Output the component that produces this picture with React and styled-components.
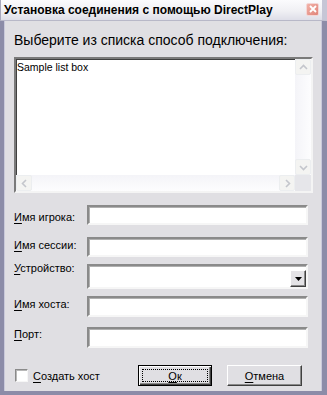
import React from "react";
import styled, { createGlobalStyle } from "styled-components";

const Global = createGlobalStyle`
  html, body { margin: 0; padding: 0; background: #e0dfe3; }
  body {
    font-family: "Liberation Sans", Arial, sans-serif;
    font-size: 11px;
    color: #000;
  }
  * { box-sizing: border-box; }
`;

const Window = styled.div`
  width: 327px;
  height: 395px;
  display: flex;
  flex-direction: column;
  background: #e0dfe3;
`;

const TitleBar = styled.div`
  height: 21px;
  display: flex;
  align-items: center;
  justify-content: space-between;
  padding: 0 3px 0 3px;
  background: linear-gradient(#fbfbfd 0%, #f0f0f4 55%, #dedee8 100%);
  border-left: 1px solid #a8a8bc;
  border-right: 5px solid #c6c6d6;
  border-bottom: 1px solid #b8b8c8;
`;

const Title = styled.div`
  font-family: "Liberation Sans", Arial, sans-serif;
  font-weight: bold;
  font-size: 12px;
  color: #000;
  white-space: nowrap;
`;

const CloseBtn = styled.div`
  width: 13px;
  height: 13px;
  margin-top: -2px;
  border: 1px solid #f4d6d6;
  border-radius: 2px;
  background: linear-gradient(135deg, #f2b2a8, #e0847a);
  display: flex;
  align-items: center;
  justify-content: center;
`;

const Frame = styled.div`
  flex: 1;
  display: flex;
  flex-direction: column;
  border-left: 4px solid #8c8ca8;
  border-right: 5px solid #8c8ca8;
  border-bottom: 4px solid #8c8ca8;
  position: relative;
  background: #e0dfe3;
  padding: 11px 9px 0 10px;
  &::before {
    content: "";
    position: absolute;
    inset: 0;
    pointer-events: none;
    border-left: 1px solid #c9c9da;
    border-right: 1px solid #c9c9da;
  }
`;

const Prompt = styled.div`
  font-size: 14px;
  line-height: 16px;
  height: 16px;
  white-space: nowrap;
`;

const ListBox = styled.div`
  margin-top: 9px;
  height: 136px;
  background: #fff;
  border: 2px solid;
  border-color: #7a7a7a #f4f4f4 #f4f4f4 #7a7a7a;
  box-shadow: inset 1px 1px 0 #404040;
  display: grid;
  grid-template-columns: 1fr 16px;
  grid-template-rows: 1fr 16px;
`;

const ListItems = styled.div`
  padding: 1px 1px;
  font-size: 10.5px;
  line-height: 14px;
`;

const VScroll = styled.div`
  display: flex;
  flex-direction: column;
  justify-content: space-between;
  background: linear-gradient(90deg, #f4f4f8, #fdfdfe);
`;

const HScroll = styled.div`
  display: flex;
  justify-content: space-between;
  background: linear-gradient(#f4f4f8, #fdfdfe);
`;

const Corner = styled.div`
  background: #e6e6ea;
`;

const ScrollBtn = styled.div`
  width: 16px;
  height: 16px;
  border: 1px solid #eceef0;
  border-radius: 2px;
  background: #f4f4f2;
  display: flex;
  align-items: center;
  justify-content: center;
`;

const Row = styled.div`
  display: flex;
  align-items: flex-start;
  margin-top: ${(p) => p.$gap}px;
`;

const Label = styled.label`
  width: 73px;
  flex: none;
  font-size: 11px;
  line-height: 14px;
  margin-top: ${(p) => p.$dy}px;
  white-space: nowrap;
`;

const U = styled.span`
  text-decoration: underline;
  text-underline-offset: 2px;
`;

const TextInput = styled.div`
  width: 221px;
  height: ${(p) => p.$h}px;
  background: #fff;
  border: 2px solid;
  border-color: #8a8a8a #f6f6f6 #f6f6f6 #8a8a8a;
  box-shadow: inset 1px 1px 0 #b0b0b0;
`;

const Combo = styled(TextInput)`
  display: flex;
  justify-content: flex-end;
  align-items: flex-end;
`;

const DropBtn = styled.div`
  width: 16px;
  height: 17px;
  background: #e4e3e6;
  border: 1px solid;
  border-color: #ffffff #404040 #404040 #ffffff;
  box-shadow: inset -1px -1px 0 #8a8a8a;
  display: flex;
  align-items: center;
  justify-content: center;
`;

const BottomRow = styled.div`
  display: flex;
  align-items: center;
  margin-top: 17px;
`;

const CheckWrap = styled.label`
  display: flex;
  align-items: center;
  width: 124px;
  padding-left: 1px;
  font-size: 11px;
`;

const Box = styled.span`
  width: 13px;
  height: 13px;
  margin-right: 5px;
  background: #fff;
  border: 1px solid;
  border-color: #8a8a8a #f6f6f6 #f6f6f6 #8a8a8a;
  box-shadow: inset 1px 1px 0 #b8b8b8;
`;

const Button = styled.div`
  width: ${(p) => p.$w}px;
  height: 21px;
  margin-left: ${(p) => p.$ml}px;
  background: #e0dfe3;
  font-size: 11px;
  display: flex;
  align-items: center;
  justify-content: center;
  position: relative;
  border: 1px solid;
  border-color: ${(p) => (p.$default ? "#000" : "#ffffff #404040 #404040 #ffffff")};
  box-shadow: ${(p) =>
    p.$default
      ? "inset 1px 1px 0 #fff, inset -1px -1px 0 #404040, inset -2px -2px 0 #8a8a8a"
      : "inset -1px -1px 0 #8a8a8a"};
`;

const Focus = styled.span`
  position: absolute;
  inset: 3px;
  border: 1px dotted #000;
  pointer-events: none;
`;

const Chevron = ({ dir }) => {
  const d = {
    up: "M4 9 L7.5 5.5 L11 9",
    down: "M4 6 L7.5 9.5 L11 6",
    left: "M9 4 L5.5 7.5 L9 11",
    right: "M6 4 L9.5 7.5 L6 11",
  }[dir];
  return (
    <svg width="14" height="14" viewBox="0 0 14 14">
      <path d={d} stroke="#c4c6cc" strokeWidth="1.6" fill="none" />
    </svg>
  );
};

export default function App() {
  return (
    <>
      <Global />
      <Window>
        <TitleBar>
          <Title>Установка соединения с помощью DirectPlay</Title>
          <CloseBtn>
            <svg width="8" height="8" viewBox="0 0 8 8">
              <path d="M1 1 L7 7 M7 1 L1 7" stroke="#fff" strokeWidth="1.8" />
            </svg>
          </CloseBtn>
        </TitleBar>
        <Frame>
          <Prompt>Выберите из списка способ подключения:</Prompt>
          <ListBox>
            <ListItems>Sample list box</ListItems>
            <VScroll>
              <ScrollBtn><Chevron dir="up" /></ScrollBtn>
              <ScrollBtn><Chevron dir="down" /></ScrollBtn>
            </VScroll>
            <HScroll>
              <ScrollBtn><Chevron dir="left" /></ScrollBtn>
              <ScrollBtn><Chevron dir="right" /></ScrollBtn>
            </HScroll>
            <Corner />
          </ListBox>

          <Row $gap={12}>
            <Label $dy={5}><U>И</U>мя игрока:</Label>
            <TextInput $h={20} />
          </Row>
          <Row $gap={12}>
            <Label $dy={1}><U>И</U>мя сессии:</Label>
            <TextInput $h={20} />
          </Row>
          <Row $gap={7}>
            <Label $dy={-3}><U>У</U>стройство:</Label>
            <Combo $h={25}>
              <DropBtn>
                <svg width="7" height="4" viewBox="0 0 7 4">
                  <path d="M0 0 H7 L3.5 4 Z" fill="#000" />
                </svg>
              </DropBtn>
            </Combo>
          </Row>
          <Row $gap={7}>
            <Label $dy={1}><U>И</U>мя хоста:</Label>
            <TextInput $h={21} />
          </Row>
          <Row $gap={10}>
            <Label $dy={0}><U>П</U>орт:</Label>
            <TextInput $h={21} />
          </Row>

          <BottomRow>
            <CheckWrap>
              <Box />
              <span><U>С</U>оздать хост</span>
            </CheckWrap>
            <Button $w={74} $ml={0} $default>
              <Focus />
              <span><U>О</U>к</span>
            </Button>
            <Button $w={75} $ml={15}>
              <span><U>О</U>тмена</span>
            </Button>
          </BottomRow>
        </Frame>
      </Window>
    </>
  );
}
